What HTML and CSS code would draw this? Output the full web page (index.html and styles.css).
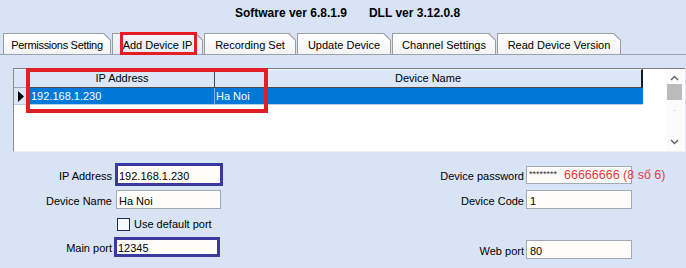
FILE: index.html
```html
<!DOCTYPE html>
<html lang="en">
<head>
    <meta charset="UTF-8">
    <meta name="viewport" content="width=device-width, initial-scale=1.0">
    <title>Add Device IP</title>
    <link rel="stylesheet" href="styles.css">
</head>
<body>
    <div class="window">
        <h1 class="title">
            <span>Software ver 6.8.1.9</span>
            <span>DLL ver 3.12.0.8</span>
        </h1>

        <div class="tabs">
            <div class="tab tab-perm"><span>Permissions Setting</span></div>
            <div class="tab tab-add active"><span>Add Device IP</span></div>
            <div class="tab tab-rec"><span>Recording Set</span></div>
            <div class="tab tab-upd"><span>Update Device</span></div>
            <div class="tab tab-chan"><span>Channel Settings</span></div>
            <div class="tab tab-ver"><span>Read Device Version</span></div>
        </div>

        <div class="grid">
            <div class="grid-body">
                <div class="row head">
                    <div class="cell ind"></div>
                    <div class="cell ip">IP Address</div>
                    <div class="cell name">Device Name</div>
                </div>
                <div class="row selected">
                    <div class="cell ind">
                        <svg width="7" height="11" viewBox="0 0 7 11"><path d="M0 0 L6 5.5 L0 11 Z" fill="#000"/></svg>
                    </div>
                    <div class="cell ip">192.168.1.230</div>
                    <div class="cell name">Ha Noi</div>
                </div>
            </div>
            <div class="scrollbar">
                <svg class="arrow" width="9" height="6" viewBox="0 0 9 6"><path d="M1 5 L4.5 1.5 L8 5" fill="none" stroke="#606060" stroke-width="1.4"/></svg>
                <div class="thumb"></div>
                <div class="dots"></div>
                <svg class="arrow down" width="9" height="6" viewBox="0 0 9 6"><path d="M1 1 L4.5 4.5 L8 1" fill="none" stroke="#606060" stroke-width="1.4"/></svg>
            </div>
        </div>

        <div class="form">
            <div class="group left">
                <div class="field r1">
                    <label>IP Address</label>
                    <div class="input focus">192.168.1.230</div>
                </div>
                <div class="field r2">
                    <label>Device Name</label>
                    <div class="input">Ha Noi</div>
                </div>
                <div class="field r3">
                    <label></label>
                    <div class="check"><span class="box"></span>Use default port</div>
                </div>
                <div class="field r4">
                    <label>Main port</label>
                    <div class="input focus port">12345</div>
                </div>
            </div>

            <div class="group right">
                <div class="field r1">
                    <label>Device password</label>
                    <div class="input pass">********</div>
                </div>
                <div class="field r2">
                    <label>Device Code</label>
                    <div class="input">1</div>
                </div>
                <div class="field r3">
                    <label>Web port</label>
                    <div class="input">80</div>
                </div>
            </div>
        </div>

        <!-- annotations drawn over the screenshot -->
        <div class="mark mark-tab"></div>
        <div class="mark mark-grid"></div>
        <div class="note">66666666 (8 số 6)</div>
    </div>
</body>
</html>
```

FILE: styles.css
```css
* {
    box-sizing: border-box;
    margin: 0;
    padding: 0;
}

body {
    background-color: #d8e4f6;
    font-family: "Liberation Sans", Arial, sans-serif;
    font-size: 11px;
    color: #000;
}

.window {
    position: relative;
    width: 686px;
    height: 268px;
    overflow: hidden;
}

.title {
    display: flex;
    justify-content: center;
    gap: 22px;
    height: 33px;
    padding: 6px 0 0 9px;
    font-size: 12px;
    line-height: 14px;
    font-weight: bold;
}

/* tab strip */
.tabs {
    display: flex;
    gap: 1px;
    height: 22px;
    padding-left: 3px;
    border-bottom: 1px solid #9aa3ad;
}

.tab {
    height: 21px;
    background-color: #9c9c9c;
    clip-path: polygon(0 0, calc(100% - 7px) 0, 100% 7px, 100% 100%, 0 100%);
}

.tab span {
    display: block;
    height: 20px;
    margin: 1px 1px 0 1px;
    padding-top: 5px;
    line-height: 13px;
    text-align: center;
    white-space: nowrap;
    background: linear-gradient(#ffffff, #f3f3f3);
    clip-path: polygon(0 0, calc(100% - 6.6px) 0, 100% 6.6px, 100% 100%, 0 100%);
}

.tab.active span {
    background: linear-gradient(#f4f7fc, #e6edf8);
}

.tab-perm { width: 108px; }
.tab-perm span { letter-spacing: -0.3px; }
.tab-add { width: 91px; }
.tab-rec { width: 92px; }
.tab-upd { width: 94px; }
.tab-chan { width: 104px; }
.tab-ver { width: 124px; }

/* data grid */
.grid {
    display: flex;
    height: 84px;
    margin: 13px 1px 0 13px;
    border-top: 1px solid #7d7d7d;
    border-left: 1px solid #8a8a8a;
    border-bottom: 1px solid #eef0f3;
    background-color: #fff;
}

.grid-body {
    flex: 1;
}

.row {
    display: grid;
    grid-template-columns: 16px 185px 428px;
}

.row.head {
    height: 19px;
}

.row.head .cell {
    background-color: #dbe6f8;
    border-top: 1px solid #f4f8fe;
    border-right: 1px solid #4a4a4a;
    border-bottom: 1px solid #4a4a4a;
    text-align: center;
    line-height: 16px;
}

.row.head .cell.ind {
    border-right-color: #9aa6b5;
    border-bottom-color: #9aa6b5;
}

.row.head .cell.name {
    border-right: 2px solid #1a1a1a;
}

.row.selected {
    height: 17px;
}

.row.selected .cell {
    background-color: #0078d7;
    color: #fff;
    line-height: 16px;
    padding-left: 1px;
    border-bottom: 1px solid #b7cde8;
}

.row.selected .cell.ip {
    border-right: 1px solid #7fb4e6;
}

.row.selected .cell.ind {
    display: flex;
    align-items: center;
    padding-left: 4px;
    background-color: #dbe6f8;
    border-right: 1px solid #9aa6b5;
}

.scrollbar {
    display: flex;
    flex-direction: column;
    align-items: center;
    width: 17px;
    margin-right: 2px;
    background-color: #fbfbfb;
}

.scrollbar .arrow {
    margin-top: 6px;
}

.scrollbar .thumb {
    width: 15px;
    height: 16px;
    margin-top: 3px;
    background-color: #c6c6c6;
    background-image: radial-gradient(#b0b0b0 0.6px, transparent 0.8px);
    background-size: 2px 2px;
}

.scrollbar .dots {
    width: 3px;
    height: 1px;
    margin-top: 10px;
    background-color: #e2e2e2;
}

.scrollbar .down {
    margin-top: auto;
    margin-bottom: 6px;
}

/* input form */
.form {
    display: flex;
}

.group {
    display: flex;
    flex-direction: column;
}

.field {
    display: flex;
    align-items: center;
}

.field label {
    text-align: right;
    white-space: nowrap;
    padding-top: 2px;
}

.input {
    display: flex;
    align-items: center;
    padding: 2px 0 0 2px;
    background-color: #fffdf9;
    border: 1px solid #a3a9b1;
    white-space: nowrap;
}

.input.focus {
    border: 3px solid #3a3a9e;
    padding-left: 1px;
}

.left label {
    width: 112px;
    margin-right: 3px;
}

.left .input {
    width: 105px;
    margin-left: 1px;
}

.left .input.focus {
    width: 108px;
    margin-left: 0;
}

.left .input.port {
    width: 106px;
    margin-left: -1px;
}

.left .r1 {
    margin-top: 11px;
    height: 23px;
}

.left .r1 .input {
    height: 23px;
}

.left .r2 {
    margin-top: 4px;
    height: 19px;
}

.left .r2 .input {
    height: 19px;
}

.left .r3 {
    margin-top: 8px;
    height: 14px;
}

.left .r4 {
    margin-top: 6px;
    height: 20px;
}

.left .r4 .input {
    height: 20px;
}

.check {
    display: flex;
    align-items: center;
    margin-left: 2px;
    white-space: nowrap;
}

.check .box {
    width: 13px;
    height: 13px;
    margin-right: 4px;
    background-color: #f7f9fd;
    border: 1px solid #1f2c4f;
}

.right {
    margin-left: 177px;
}

.right label {
    width: 124px;
    margin-right: 2px;
}

.right .input {
    width: 106px;
    height: 19px;
    padding-left: 3px;
}

.right .input.pass {
    height: 18px;
    align-items: flex-start;
    padding: 2px 0 0 2px;
    font-size: 9px;
    color: #333;
}

.right .r1 {
    margin-top: 14px;
    height: 18px;
}

.right .r2 {
    margin-top: 6px;
    height: 19px;
}

.right .r3 {
    margin-top: 31px;
    height: 19px;
}

/* red annotations */
.mark {
    position: absolute;
    border: 3px solid #e31e26;
}

.mark-tab {
    left: 120px;
    top: 32px;
    width: 77px;
    height: 23px;
}

.mark-grid {
    left: 26px;
    top: 68px;
    width: 242px;
    height: 45px;
    border-width: 4px;
}

.note {
    position: absolute;
    left: 564px;
    top: 166px;
    font-size: 12.5px;
    line-height: 18px;
    color: #e43a42;
    white-space: nowrap;
}
```
